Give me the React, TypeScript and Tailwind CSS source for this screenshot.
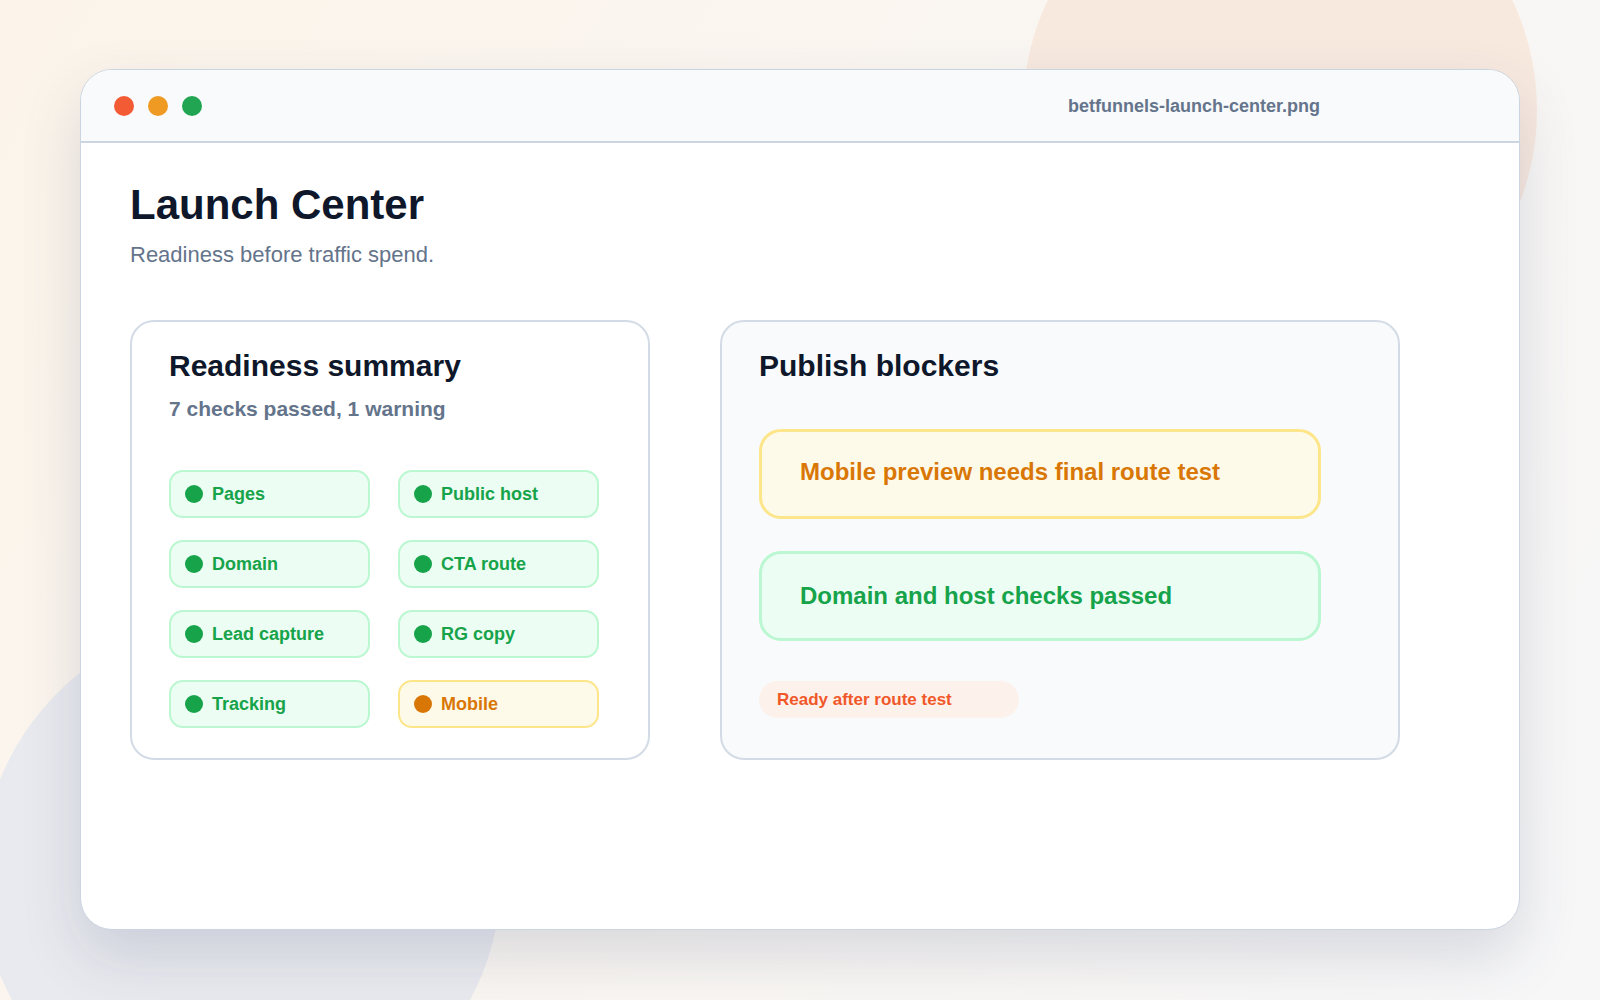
import React from "react";

const checks: { label: string; warn?: boolean }[] = [
  { label: "Pages" },
  { label: "Public host" },
  { label: "Domain" },
  { label: "CTA route" },
  { label: "Lead capture" },
  { label: "RG copy" },
  { label: "Tracking" },
  { label: "Mobile", warn: true },
];

function Pill({ label, warn }: { label: string; warn?: boolean }) {
  return (
    <div
      className={
        warn
          ? "flex h-[48px] items-center gap-[9px] rounded-[14px] border-2 border-[#fde68a] bg-[#fefaea] pl-[14px]"
          : "flex h-[48px] items-center gap-[9px] rounded-[14px] border-2 border-[#bbf7d0] bg-[#ecfdf3] pl-[14px]"
      }
    >
      <span
        className={
          warn
            ? "h-[18px] w-[18px] shrink-0 rounded-full bg-[#d97706]"
            : "h-[18px] w-[18px] shrink-0 rounded-full bg-[#16a34a]"
        }
      />
      <span
        className={
          warn
            ? "text-[18px] font-bold leading-[22px] text-[#d97706]"
            : "text-[18px] font-bold leading-[22px] text-[#16a34a]"
        }
      >
        {label}
      </span>
    </div>
  );
}

export default function App() {
  return (
    <div className="relative h-[1000px] w-[1600px] overflow-hidden bg-[linear-gradient(120deg,#fcf4ea_0%,#faf6f1_45%,#f7f7f8_100%)] font-['Liberation_Sans',Arial,sans-serif]">
      {/* decorative background blobs */}
      <div className="absolute left-[1023px] top-[-147px] h-[514px] w-[514px] rounded-full bg-[#f8e9df]" />
      <div className="absolute left-[-19px] top-[617px] h-[520px] w-[520px] rounded-full bg-[#e9eaef]" />

      <div className="relative pl-[80px] pt-[69px]">
        <div className="flex h-[861px] w-[1440px] flex-col overflow-hidden rounded-[32px] border border-[#cbd5e1] bg-white shadow-[0_26px_60px_rgba(51,65,105,0.16)]">
          {/* title bar */}
          <div className="flex h-[73px] shrink-0 items-center justify-between border-b-2 border-[#cbd5e1] bg-[#f8fafc] pl-[33px] pr-[199px]">
            <div className="flex items-center gap-[14px]">
              <span className="h-[20px] w-[20px] rounded-full bg-[#f35b35]" />
              <span className="h-[20px] w-[20px] rounded-full bg-[#ef9a22]" />
              <span className="h-[20px] w-[20px] rounded-full bg-[#22a553]" />
            </div>
            <span className="text-[18px] font-bold leading-[22px] text-[#64748b]">
              betfunnels-launch-center.png
            </span>
          </div>

          {/* content */}
          <div className="flex flex-col pl-[49px] pt-[37px]">
            <h1 className="text-[42px] font-bold leading-[50px] text-[#0f172a]">Launch Center</h1>
            <p className="mt-[11px] text-[22px] leading-[28px] text-[#64748b]">
              Readiness before traffic spend.
            </p>

            <div className="mt-[51px] flex gap-[70px]">
              {/* Readiness summary */}
              <div className="flex h-[440px] w-[520px] flex-col rounded-[24px] border-2 border-[#d3dbe6] bg-white pl-[37px] pt-[26px]">
                <h2 className="text-[30px] font-bold leading-[36px] text-[#0f172a]">Readiness summary</h2>
                <p className="mt-[11px] text-[21px] font-bold leading-[28px] text-[#64748b]">
                  7 checks passed, 1 warning
                </p>
                <div className="mt-[47px] grid grid-cols-[201px_201px] gap-x-[28px] gap-y-[22px]">
                  {checks.map((c) => (
                    <Pill key={c.label} label={c.label} warn={c.warn} />
                  ))}
                </div>
              </div>

              {/* Publish blockers */}
              <div className="flex h-[440px] w-[680px] flex-col rounded-[24px] border-2 border-[#d3dbe6] bg-[#f8fafc] pl-[37px] pt-[26px]">
                <h2 className="text-[30px] font-bold leading-[36px] text-[#0f172a]">Publish blockers</h2>
                <div className="mt-[45px] flex h-[90px] w-[562px] items-center rounded-[22px] border-[3px] border-[#fde68a] bg-[#fefae9] pb-[4px] pl-[38px]">
                  <span className="text-[24px] font-bold leading-[28px] text-[#d97706]">
                    Mobile preview needs final route test
                  </span>
                </div>
                <div className="mt-[32px] flex h-[90px] w-[562px] items-center rounded-[22px] border-[3px] border-[#bbf7d0] bg-[#ecfdf4] pl-[38px]">
                  <span className="text-[24px] font-bold leading-[28px] text-[#16a34a]">
                    Domain and host checks passed
                  </span>
                </div>
                <div className="mt-[40px] flex h-[37px] w-[260px] items-center rounded-full bg-[#fdf1eb] pl-[18px]">
                  <span className="text-[17px] font-bold leading-[20px] text-[#f0582a]">
                    Ready after route test
                  </span>
                </div>
              </div>
            </div>
          </div>
        </div>
      </div>
    </div>
  );
}
